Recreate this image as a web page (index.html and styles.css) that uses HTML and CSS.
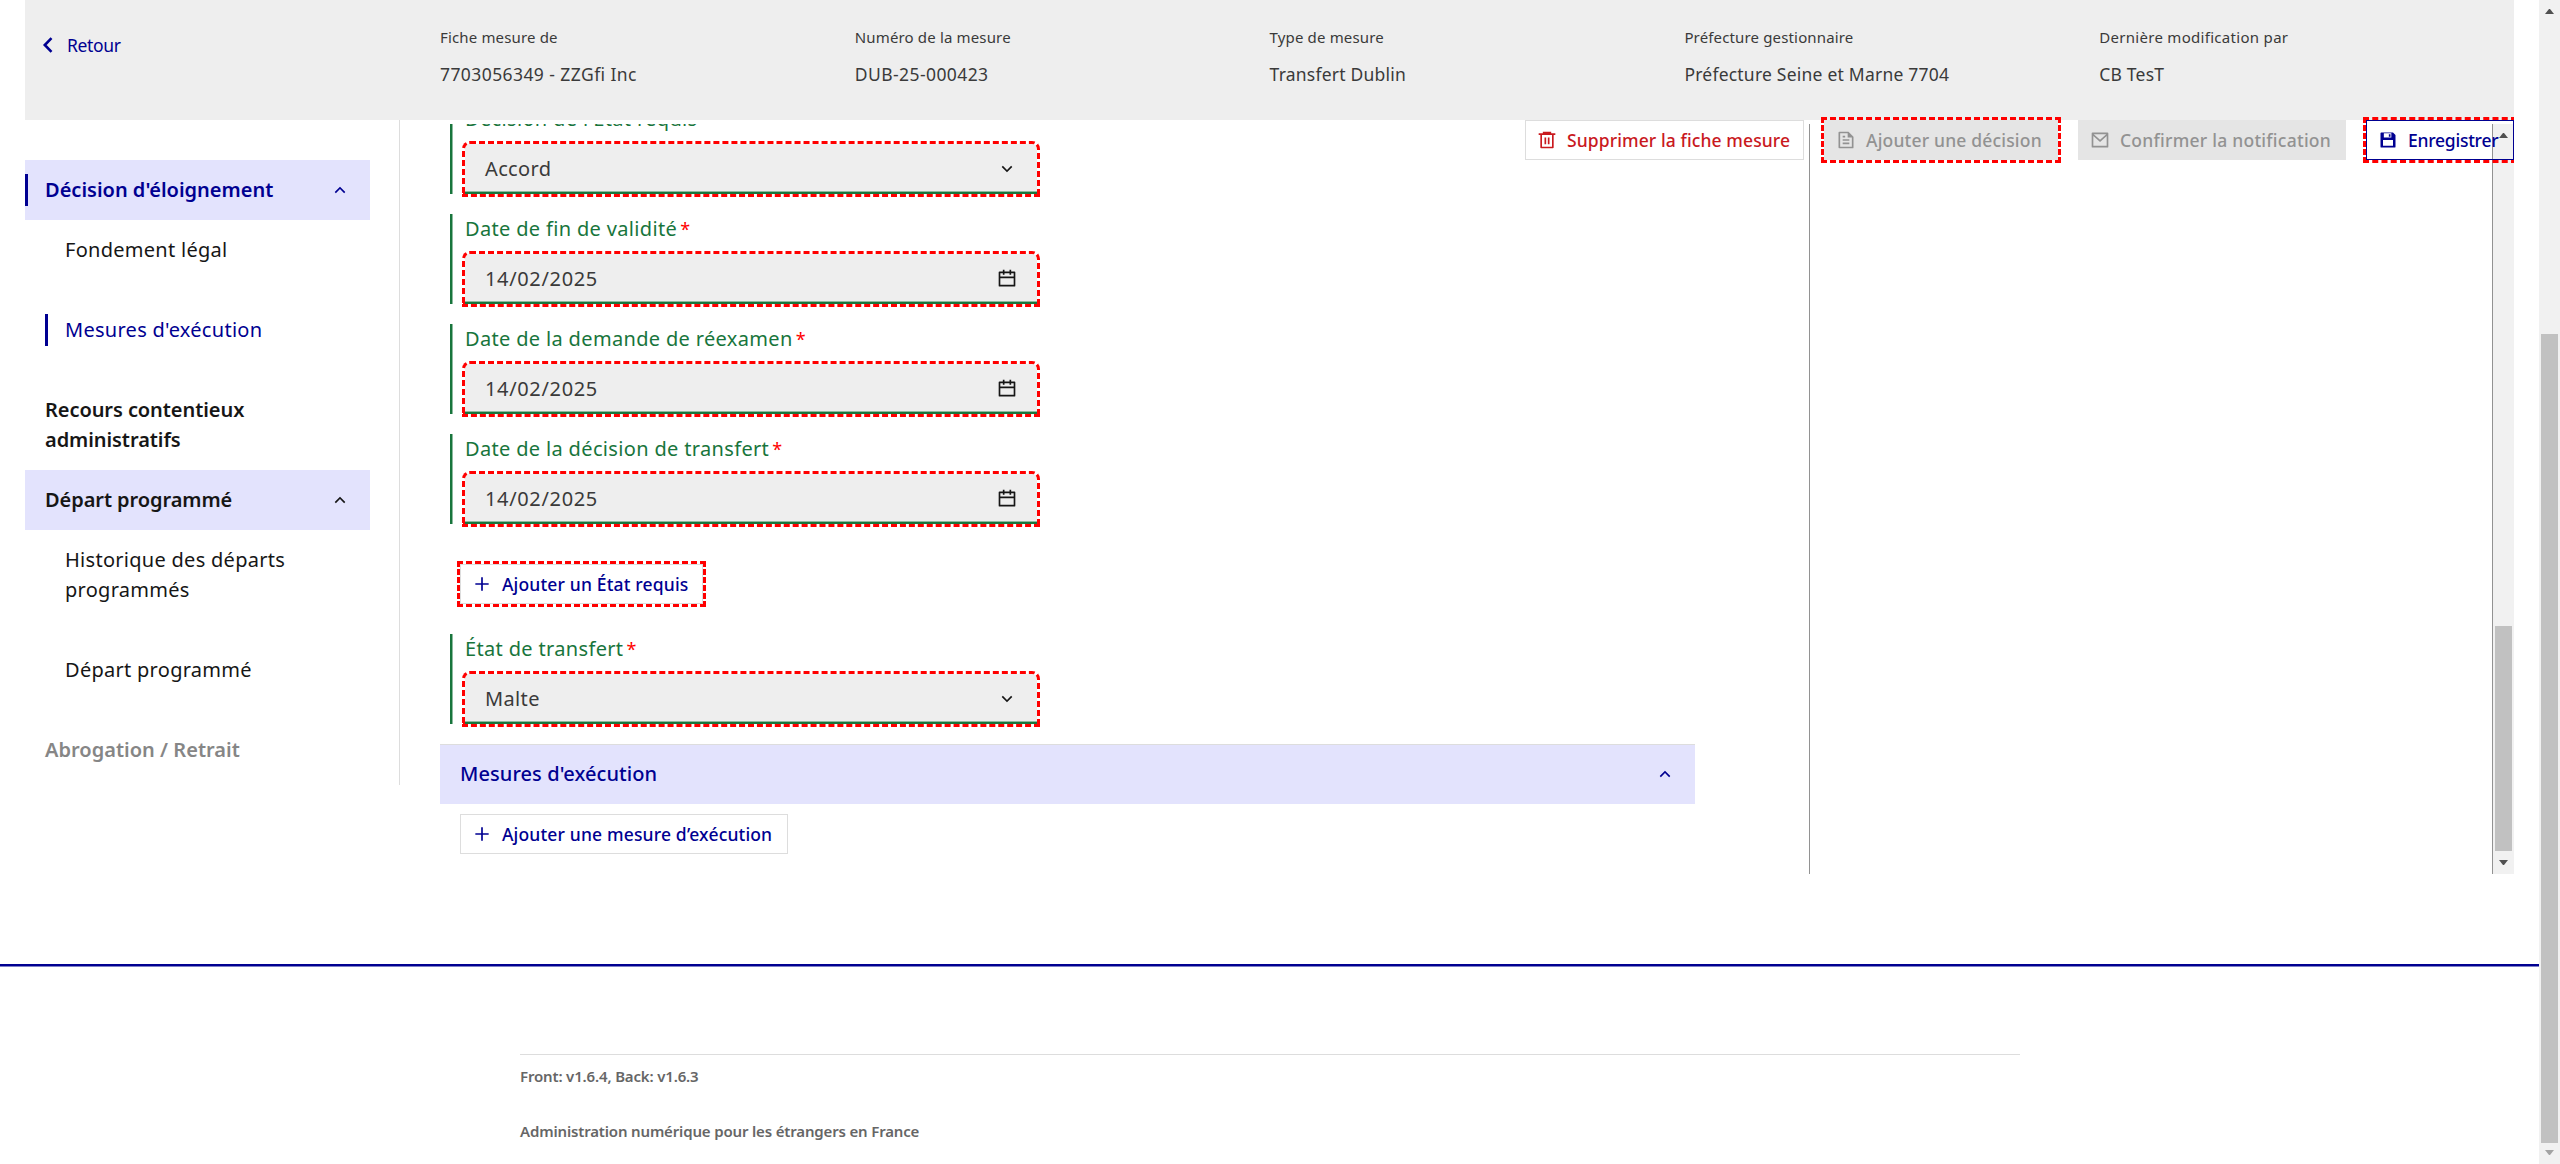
FILE: index.html
```html
<!DOCTYPE html>
<html lang="fr">
<head>
<meta charset="utf-8">
<title>Fiche mesure</title>
<link rel="stylesheet" href="styles.css">
</head>
<body>
<svg class="sprite" aria-hidden="true">
  <symbol id="up" viewBox="0 0 24 24"><path d="M12 10.828l-4.95 4.95-1.414-1.414L12 8l6.364 6.364-1.414 1.414z"/></symbol>
  <symbol id="down" viewBox="0 0 24 24"><path d="M12 13.172l4.95-4.95 1.414 1.414L12 16 5.636 9.636 7.05 8.222z"/></symbol>
  <symbol id="add" viewBox="0 0 24 24"><path d="M11 11V4h2v7h7v2h-7v7h-2v-7H4v-2z"/></symbol>
  <symbol id="calendar" viewBox="0 0 24 24"><path d="M17 3h4a1 1 0 0 1 1 1v16a1 1 0 0 1-1 1H3a1 1 0 0 1-1-1V4a1 1 0 0 1 1-1h4V1h2v2h6V1h2v2zm3 8H4v8h16v-8zm-5-6H9v2H7V5H4v4h16V5h-3v2h-2V5z"/></symbol>
  <symbol id="trash" viewBox="0 0 24 24"><path d="M17 4h5v2h-2v15a1 1 0 0 1-1 1H5a1 1 0 0 1-1-1V6H2V4h5V2h10v2zm1 2H6v14h12V6zm-9 3h2v8H9V9zm4 0h2v8h-2V9z"/></symbol>
  <symbol id="file" viewBox="0 0 24 24"><path d="M21 8v12.993A1 1 0 0 1 20.007 22H3.993A.993.993 0 0 1 3 21.008V2.992C3 2.455 3.449 2 4.002 2h10.995L21 8zm-2 1h-5V4H5v16h14V9zM8 7h3v2H8V7zm0 4h8v2H8v-2zm0 4h8v2H8v-2z"/></symbol>
  <symbol id="mail" viewBox="0 0 24 24"><path d="M3 3h18a1 1 0 0 1 1 1v16a1 1 0 0 1-1 1H3a1 1 0 0 1-1-1V4a1 1 0 0 1 1-1zm17 4.238l-7.928 7.1L4 7.216V19h16V7.238zM4.511 5l7.55 6.662L19.502 5H4.511z"/></symbol>
  <symbol id="save" viewBox="0 0 24 24"><path fill-rule="evenodd" d="M4 3h14l2.707 2.707a1 1 0 0 1 .293.707V20a1 1 0 0 1-1 1H4a1 1 0 0 1-1-1V4a1 1 0 0 1 1-1zm3 1v5h9V4H7zm-1 8v7h12v-7H6zm7-7h2v3h-2V5z"/></symbol>
</svg>

<div class="page">
  <div class="sheet">
    <header class="banner">
      <a class="back"><svg class="back-icon" viewBox="0 0 12 16"><path d="M9.500 1.200L2.800 8l6.700 6.800"/></svg>Retour</a>
      <dl class="facts">
        <div class="fact"><dt>Fiche mesure de</dt><dd class="digits">7703056349 - ZZGfi Inc</dd></div>
        <div class="fact"><dt>Numéro de la mesure</dt><dd class="digits">DUB-25-000423</dd></div>
        <div class="fact"><dt>Type de mesure</dt><dd>Transfert Dublin</dd></div>
        <div class="fact"><dt>Préfecture gestionnaire</dt><dd>Préfecture Seine et Marne 7704</dd></div>
        <div class="fact"><dt class="wide">Dernière modification par</dt><dd>CB TesT</dd></div>
      </dl>
    </header>

    <div class="columns">
      <nav class="sidebar">
        <a class="group current"><span>Décision d'éloignement</span><svg class="icon"><use href="#up"/></svg></a>
        <a class="link">Fondement légal</a>
        <a class="link active">Mesures d'exécution</a>
        <a class="single">Recours contentieux administratifs</a>
        <a class="group"><span>Départ programmé</span><svg class="icon"><use href="#up"/></svg></a>
        <a class="link">Historique des départs programmés</a>
        <a class="link spaced">Départ programmé</a>
        <a class="single disabled">Abrogation / Retrait</a>
      </nav>

      <div class="scroller">
        <main class="form">
          <div class="field clipped"><label>Décision de l'État requis<i>*</i></label><div class="input"><span>Accord</span><svg class="icon"><use href="#down"/></svg></div></div>
          <div class="field"><label>Date de fin de validité<i>*</i></label><div class="input date"><span>14/02/2025</span><svg class="icon"><use href="#calendar"/></svg></div></div>
          <div class="field"><label>Date de la demande de réexamen<i>*</i></label><div class="input date"><span>14/02/2025</span><svg class="icon"><use href="#calendar"/></svg></div></div>
          <div class="field"><label>Date de la décision de transfert<i>*</i></label><div class="input date"><span>14/02/2025</span><svg class="icon"><use href="#calendar"/></svg></div></div>
          <button class="btn add-state marked"><svg class="icon"><use href="#add"/></svg>Ajouter un État requis</button>
          <div class="field"><label>État de transfert<i>*</i></label><div class="input"><span>Malte</span><svg class="icon"><use href="#down"/></svg></div></div>
          <h2 class="section"><span>Mesures d'exécution</span><svg class="icon"><use href="#up"/></svg></h2>
          <button class="btn add-measure"><svg class="icon"><use href="#add"/></svg>Ajouter une mesure d’exécution</button>
        </main>
        <aside class="panel"></aside>
        <div class="bar inner"><b class="arrow-up"></b><b class="thumb"></b><b class="arrow-down"></b></div>
      </div>
    </div>

    <div class="actions">
      <button class="btn delete"><svg class="icon"><use href="#trash"/></svg>Supprimer la fiche mesure</button>
      <button class="btn off marked decision"><svg class="icon"><use href="#file"/></svg>Ajouter une décision</button>
      <button class="btn off notify"><svg class="icon"><use href="#mail"/></svg>Confirmer la notification</button>
      <button class="btn save marked"><svg class="icon"><use href="#save"/></svg>Enregistrer</button>
    </div>
  </div>

  <footer class="footer">
    <div class="footer-body">
      <p>Front: v1.6.4, Back: v1.6.3</p>
      <p>Administration numérique pour les étrangers en France</p>
    </div>
  </footer>
</div>
<div class="bar outer"><b class="arrow-up"></b><b class="thumb"></b><b class="arrow-down muted"></b></div>
</body>
</html>
```
FILE: styles.css
```css
* { box-sizing: border-box; }
html, body { height: 100%; }
body {
  margin: 0;
  display: flex;
  overflow: hidden;
  background: #fff;
  color: #161616;
  font: 400 20px/30px "Noto Sans", sans-serif;
}
.sprite { display: none; }
.icon { width: 20px; height: 20px; flex: none; fill: currentColor; }
.page { flex: 1; display: flex; flex-direction: column; min-width: 0; }
.sheet { position: relative; height: 874px; margin: 0 25px; flex: none; }

/* Banner */
.banner { height: 120px; display: flex; background: #eee; color: #3a3a3a; }
.back {
  width: 415px;
  display: flex;
  align-items: center;
  height: 30px;
  margin-top: 30px;
  padding-left: 17px;
  gap: 13px;
  color: #000091;
  font-size: 17.5px;
  letter-spacing: -.35px;
}
.back-icon { width: 12px; height: 16px; fill: none; stroke: #000091; stroke-width: 2.6; }
.facts { display: flex; margin: 0; padding-top: 22px; }
.fact { width: 414.8px; }
.fact dt { font-size: 15px; line-height: 30px; letter-spacing: .15px; }
.fact dt.wide { letter-spacing: .3px; }
.fact dd { margin: 7px 0 0; font-size: 17.5px; line-height: 30px; letter-spacing: .22px; }
.fact dd.digits { letter-spacing: .42px; }

.columns { display: flex; height: 754px; }

/* Side menu */
.sidebar {
  width: 375px;
  flex: none;
  height: 665px;
  padding: 40px 29px 0 0;
  border-right: 1px solid #ddd;
  display: flex;
  flex-direction: column;
  letter-spacing: .28px;
}
.group, .single { font-weight: 600; letter-spacing: -.07px; }
.group {
  height: 60px;
  padding: 0 20px;
  display: flex;
  align-items: center;
  justify-content: space-between;
  background: #e3e3fd;
}
.current { padding-left: 17px; color: #000091; border-left: 3px solid; border-image: linear-gradient(transparent 25%, #000091 25% 75%, transparent 75%) 1; letter-spacing: 0; }
.link { padding: 15px 20px 15px 40px; }
.link.active {
  margin: 20px 0 20px 20px;
  padding-left: 17px;
  color: #000091;
  border-left: 3px solid;
  border-image: linear-gradient(transparent 25%, #000091 25% 75%, transparent 75%) 1;
}
.single { padding: 15px 60px 15px 20px; }
.spaced { margin: 20px 0; }
.disabled { color: #868686; letter-spacing: .02px; }

/* Scrolling form */
.scroller { flex: 1; height: 750px; margin: 4px 0 0 40px; display: flex; overflow: hidden; }
.form { width: 1369px; flex: none; display: flex; flex-direction: column; align-items: flex-start; }
.field {
  width: 597px;
  height: 90px;
  margin: 0 0 20px 10px;
  padding-left: 15px;
  color: #18753c;
  box-shadow: inset 2px 0 #18753c, inset 3px 0 #8cba9e;
  flex: none;
}
.field.clipped { margin-top: -20px; }
.field label { display: block; height: 40px; line-height: 30px; letter-spacing: .34px; white-space: nowrap; }
.field i { margin-left: 3px; color: #f00; font-style: normal; font-size: 18px; line-height: 20px; }
.input {
  width: 572px;
  height: 50px;
  padding: 0 20px;
  display: flex;
  align-items: center;
  justify-content: space-between;
  color: #3a3a3a;
  background: #eee;
  border-radius: 5px 5px 0 0;
  box-shadow: inset 0 -2px #18753c, inset 0 -3px #8cba9e;
  outline: 3px dashed #f00;
  letter-spacing: .35px;
}
.date { letter-spacing: .65px; }
.input .icon { fill: #161616; }
.section {
  width: 1255px;
  height: 60px;
  margin: 0 0 10px;
  padding: 0 20px 1px;
  display: flex;
  align-items: center;
  justify-content: space-between;
  flex: none;
  color: #000091;
  background: #e3e3fd;
  border-top: 1px solid #ddd;
  font-size: 20px;
  font-weight: 500;
  letter-spacing: .08px;
}
.panel { flex: 1; border-left: 1px solid #929292; border-right: 1px solid #929292; }

/* Buttons */
.btn {
  height: 40px;
  padding: 0 0 1px 11px;
  display: flex;
  align-items: center;
  gap: 10px;
  flex: none;
  color: #000091;
  background: transparent;
  border: 1px solid #ddd;
  font: 500 17.5px/30px "Noto Sans", sans-serif;
  letter-spacing: .16px;
  white-space: nowrap;
}
.marked { outline: 3px dashed #f00; }
.add-state { width: 243px; margin: 20px 0 30px 20px; }
.add-measure { width: 328px; margin-left: 20px; }
.actions {
  position: absolute;
  top: 120px;
  right: 0;
  display: flex;
  gap: 20px;
  clip-path: inset(-3px 0);
}
.delete { width: 279px; color: #c9191e; background: #fff; letter-spacing: .1px; }
.off { color: #929292; background: #e5e5e5; border-color: #e5e5e5; }
.decision { width: 234px; letter-spacing: .18px; }
.notify { width: 268px; letter-spacing: .25px; }
.save { width: 148px; border-color: #000091; letter-spacing: -.25px; }

/* Scroll bars */
.bar { flex: none; display: flex; flex-direction: column; align-items: center; background: #f1f1f1; }
.thumb { width: 17px; flex: none; background: #c1c1c1; }
.arrow-up, .arrow-down { width: 9px; height: 5px; flex: none; background: #505050; }
.arrow-up { clip-path: polygon(4px 0, 5px 0, 9px 5px, 0 5px); }
.arrow-down { clip-path: polygon(0 0, 9px 0, 5px 5px, 4px 5px); }
.arrow-down.muted { background: #a3a3a3; }
.inner { width: 21px; padding-top: 9px; }
.inner .thumb { height: 225px; margin: 488px 0 9px; }
.outer { width: 21px; padding-top: 9px; }
.outer .thumb { height: 809px; margin: 320px 0 7px; }

/* Footer */
.footer {
  flex: 1;
  margin-top: 90px;
  padding: 88px 519px 0 520px;
  border-top: 2px solid #000091;
  border-bottom: 1px solid #ddd;
  box-shadow: inset 0 1px #8080c8, inset 0 -1px #f3f3f3;
}
.footer-body { border-top: 1px solid #ddd; padding-top: 6px; }
.footer p { margin: 0 0 25px; color: #666; font-size: 15px; font-weight: 600; letter-spacing: -.16px; }
```
